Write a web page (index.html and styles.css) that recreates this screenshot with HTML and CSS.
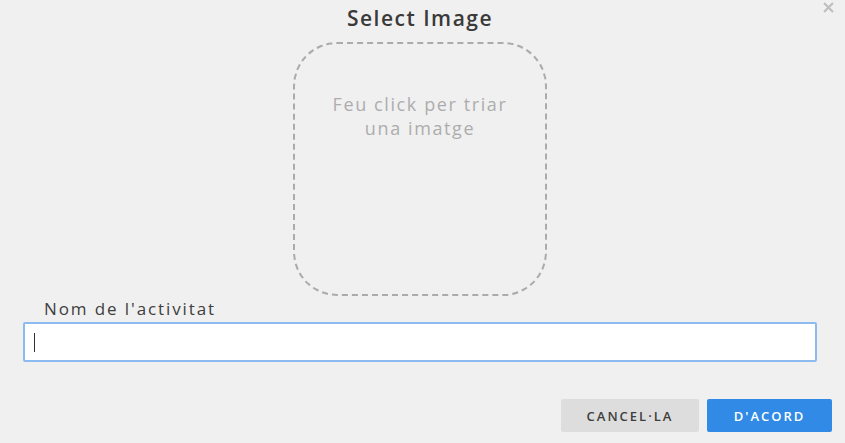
FILE: index.html
```html
<!DOCTYPE html>
<html>
<head>
<meta charset="utf-8">
<link rel="stylesheet" href="styles.css">
</head>
<body>
<div class="dialog">
  <button class="close" aria-label="close">
    <svg width="11" height="11" viewBox="0 0 11 11"><path d="M1 1L10 10M10 1L1 10" stroke="#bdbdbd" stroke-width="2"/></svg>
  </button>
  <h1 class="title">Select Image</h1>
  <div class="content">
    <div class="picker">
      <p class="picker-text">Feu click per triar<br>una imatge</p>
    </div>
    <label class="label">Nom de l'activitat</label>
    <div class="field"><span class="caret"></span></div>
  </div>
  <div class="actions">
    <button class="btn btn-cancel">CANCEL·LA</button>
    <button class="btn btn-ok">D'ACORD</button>
  </div>
</div>
</body>
</html>
```
FILE: styles.css
```css
html, body {
  margin: 0;
  padding: 0;
  background: #f0f0f0;
}
body {
  font-family: "Open Sans", "Noto Sans", sans-serif;
  color: #444;
  width: 845px;
  height: 443px;
  overflow: hidden;
}
.dialog {
  position: relative;
  display: flex;
  flex-direction: column;
}
.close {
  position: absolute;
  top: 2px;
  right: 11px;
  border: 0;
  background: none;
  padding: 0;
  width: 11px;
  height: 11px;
  display: flex;
}
.title {
  margin: 4px 0 0;
  padding-right: 5px;
  text-align: center;
  font-size: 21px;
  line-height: 28px;
  font-weight: 600;
  letter-spacing: 1.5px;
  color: #3a3a3a;
}
.content {
  display: flex;
  flex-direction: column;
  padding: 0 28px 0 23px;
}
.picker {
  align-self: center;
  margin-top: 10px;
  width: 250px;
  height: 250px;
  border: 2px dashed #ababab;
  border-radius: 44px;
  display: flex;
  justify-content: center;
}
.picker-text {
  margin: 48px 0 0;
  text-align: center;
  color: #adadad;
  font-size: 18px;
  line-height: 24px;
  letter-spacing: 1.6px;
}
.label {
  margin: 0 0 0 21px;
  padding-top: 1px;
  font-size: 17px;
  line-height: 24px;
  letter-spacing: 1.9px;
  color: #3e3e3e;
}
.field {
  margin-top: 1px;
  height: 36px;
  background: #fff;
  border: 2px solid #8cbcef;
  border-radius: 2px;
  display: flex;
  align-items: center;
  padding-left: 9px;
}
.caret {
  width: 1px;
  height: 19px;
  background: #333;
}
.actions {
  display: flex;
  justify-content: flex-end;
  gap: 8px;
  padding-right: 13px;
  margin-top: 37px;
}
.btn {
  height: 33px;
  border: 0;
  border-radius: 2px;
  font-family: "Open Sans", "Noto Sans", sans-serif;
  font-size: 13px;
  font-weight: 600;
  letter-spacing: 2px;
  padding: 0;
}
.btn-cancel {
  width: 138px;
  background: #dddddd;
  color: #3e3e3e;
}
.btn-ok {
  width: 125px;
  background: #308ae6;
  color: #fff;
}
```
